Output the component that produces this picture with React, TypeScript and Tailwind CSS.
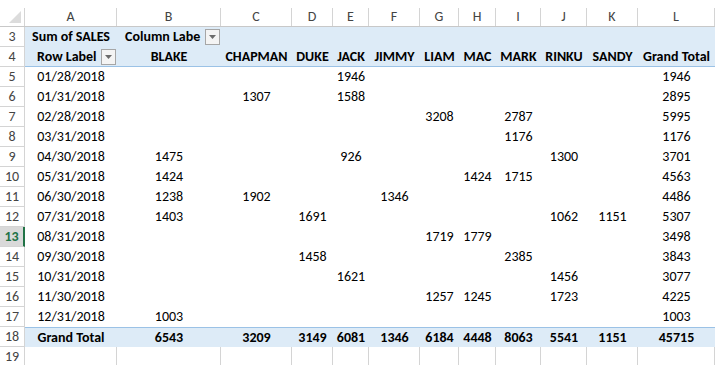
import React from "react";

const COLS = "grid grid-cols-[25px_92px_104px_71px_41px_36px_51px_39px_37px_45px_46px_51px_77px]";
const letters = ["A", "B", "C", "D", "E", "F", "G", "H", "I", "J", "K", "L"];
const names = ["BLAKE", "CHAPMAN", "DUKE", "JACK", "JIMMY", "LIAM", "MAC", "MARK", "RINKU", "SANDY", "Grand Total"];

type Row = { date: string; vals: Record<string, number>; total: number };
const rows: Row[] = [
  { date: "01/28/2018", vals: { JACK: 1946 }, total: 1946 },
  { date: "01/31/2018", vals: { CHAPMAN: 1307, JACK: 1588 }, total: 2895 },
  { date: "02/28/2018", vals: { LIAM: 3208, MARK: 2787 }, total: 5995 },
  { date: "03/31/2018", vals: { MARK: 1176 }, total: 1176 },
  { date: "04/30/2018", vals: { BLAKE: 1475, JACK: 926, RINKU: 1300 }, total: 3701 },
  { date: "05/31/2018", vals: { BLAKE: 1424, MAC: 1424, MARK: 1715 }, total: 4563 },
  { date: "06/30/2018", vals: { BLAKE: 1238, CHAPMAN: 1902, JIMMY: 1346 }, total: 4486 },
  { date: "07/31/2018", vals: { BLAKE: 1403, DUKE: 1691, RINKU: 1062, SANDY: 1151 }, total: 5307 },
  { date: "08/31/2018", vals: { LIAM: 1719, MAC: 1779 }, total: 3498 },
  { date: "09/30/2018", vals: { DUKE: 1458, MARK: 2385 }, total: 3843 },
  { date: "10/31/2018", vals: { JACK: 1621, RINKU: 1456 }, total: 3077 },
  { date: "11/30/2018", vals: { LIAM: 1257, MAC: 1245, RINKU: 1723 }, total: 4225 },
  { date: "12/31/2018", vals: { BLAKE: 1003 }, total: 1003 },
];
const totals = [6543, 3209, 3149, 6081, 1346, 6184, 4448, 8063, 5541, 1151, 45715];

function RowNum({ n, selected }: { n: number; selected?: boolean }) {
  if (selected) {
    return (
      <div className="h-[20px] flex items-center justify-center bg-[#d9d9d9] text-[#217346] border-b border-[#d4d4d4] border-r-2 border-r-[#217346] font-bold">
        {n}
      </div>
    );
  }
  return (
    <div className="h-[20px] flex items-center justify-center text-[#444] border-b border-r border-[#d4d4d4]">
      {n}
    </div>
  );
}

function DropBtn() {
  return (
    <div className="w-[15px] h-[16px] shrink-0 ml-auto border border-[#a6a6a6] bg-[#f4f4f4] flex items-center justify-center">
      <svg width="7" height="4" viewBox="0 0 7 4">
        <path d="M0 0 L7 0 L3.5 4 Z" fill="#6b6b6b" />
      </svg>
    </div>
  );
}

export default function App() {
  return (
    <div
      className="w-[715px] h-[365px] overflow-hidden bg-white text-black text-[14px] leading-none"
      style={{ fontFamily: "Carlito, Calibri, Lato, 'Open Sans', sans-serif" }}
    >
      {/* column header */}
      <div className={`${COLS} h-[27px] border-b border-[#c8c8c8]`}>
        <div className="relative border-r border-[#d4d4d4] mt-[8px]">
          <svg className="absolute right-[3px] bottom-[3px]" width="12" height="12" viewBox="0 0 12 12">
            <path d="M12 0 L12 12 L0 12 Z" fill="#dcdcdc" />
          </svg>
        </div>
        {letters.map((l) => (
          <div key={l} className="mt-[8px] border-r border-[#d4d4d4] flex items-center justify-center text-[#444] text-[14px]">
            {l}
          </div>
        ))}
      </div>

      {/* row 3 */}
      <div className={COLS}>
        <RowNum n={3} />
        <div className="h-[20px] bg-[#ddebf7] flex items-center justify-center font-bold whitespace-nowrap">Sum of SALES</div>
        <div className="h-[20px] bg-[#ddebf7] flex items-center pl-[8px] pr-[1px] font-bold whitespace-nowrap">
          <span>Column Labe</span>
          <DropBtn />
        </div>
        <div className="col-span-10 h-[20px] bg-[#ddebf7]" />
      </div>

      {/* row 4 */}
      <div className={COLS}>
        <RowNum n={4} />
        <div className="h-[20px] bg-[#ddebf7] border-b border-[#9bc2e6] flex items-center pl-[12px] pr-[1px] font-bold whitespace-nowrap">
          <span>Row Label</span>
          <DropBtn />
        </div>
        {names.map((n) => (
          <div key={n} className="h-[20px] bg-[#ddebf7] border-b border-[#9bc2e6] flex items-center justify-center font-bold whitespace-nowrap">
            {n}
          </div>
        ))}
      </div>

      {/* data rows */}
      {rows.map((r, i) => (
        <div key={r.date} className={COLS}>
          <RowNum n={i + 5} selected={i + 5 === 13} />
          <div className="h-[20px] flex items-center justify-center">{r.date}</div>
          {names.slice(0, 10).map((n) => (
            <div key={n} className="h-[20px] flex items-center justify-center">
              {r.vals[n] ?? ""}
            </div>
          ))}
          <div className="h-[20px] flex items-center justify-center">{r.total}</div>
        </div>
      ))}

      {/* grand total */}
      <div className={COLS}>
        <RowNum n={18} />
        <div className="h-[20px] bg-[#ddebf7] border-t border-[#9bc2e6] flex items-center justify-center font-bold">Grand Total</div>
        {totals.map((t, i) => (
          <div key={i} className="h-[20px] bg-[#ddebf7] border-t border-[#9bc2e6] flex items-center justify-center font-bold">
            {t}
          </div>
        ))}
      </div>

      {/* row 19 */}
      <div className={COLS}>
        <RowNum n={19} />
        {letters.map((l) => (
          <div key={l} className="h-[20px] border-r border-[#d4d4d4]" />
        ))}
      </div>
    </div>
  );
}
